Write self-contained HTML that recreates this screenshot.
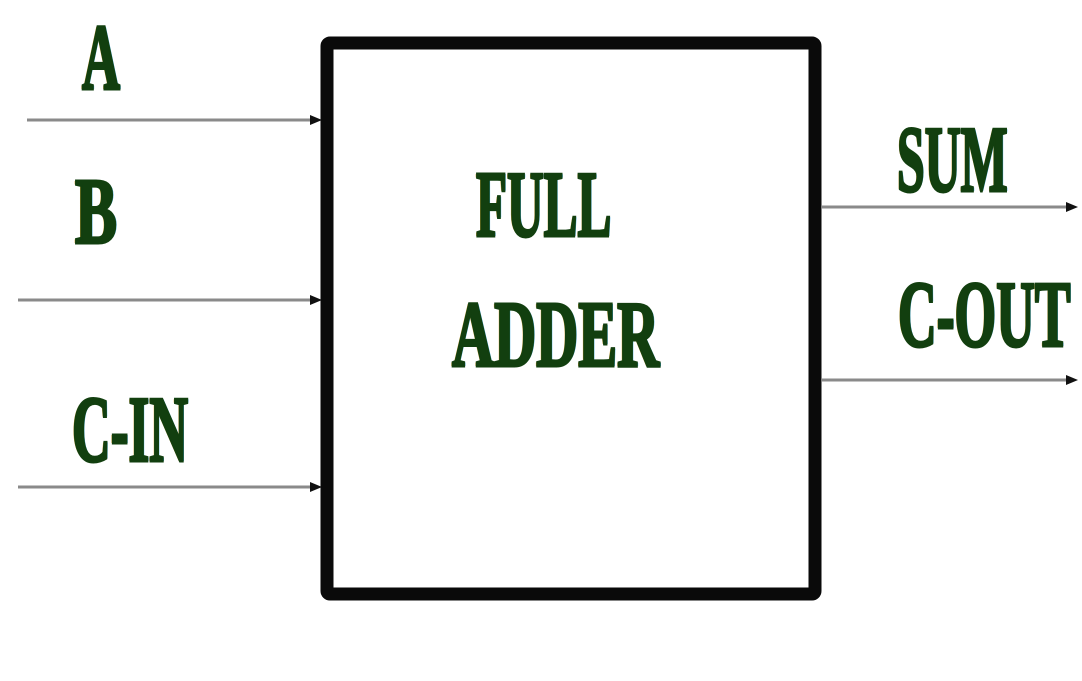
<!DOCTYPE html>
<html><head><meta charset="utf-8"><style>
html,body{margin:0;padding:0;background:#fff;}
body{width:1082px;height:681px;position:relative;overflow:hidden;}
.t{position:absolute;font-family:"Liberation Serif",serif;font-weight:bold;font-size:94px;line-height:94px;color:#123f0f;transform-origin:0 0;white-space:nowrap;-webkit-text-stroke:3px #123f0f;text-shadow:-2px 0 0 #d8a53a,2px 0 0 #45aee5;}
svg{position:absolute;left:0;top:0;}
</style></head><body>
<svg width="1082" height="681">
<g stroke="#8a8a8a" stroke-width="3">
<line x1="27" y1="120" x2="315" y2="120"/>
<line x1="18" y1="300" x2="315" y2="300"/>
<line x1="18" y1="487" x2="315" y2="487"/>
<line x1="822" y1="207" x2="1068" y2="207"/>
<line x1="822" y1="380" x2="1068" y2="380"/>
</g>
<g fill="#111">
<polygon points="310,115 322,120 310,125"/>
<polygon points="310,295 322,300 310,305"/>
<polygon points="310,482 322,487 310,492"/>
<polygon points="1066,202 1078,207 1066,212"/>
<polygon points="1066,375 1078,380 1066,385"/>
</g>
<rect x="327" y="43" width="488" height="551" fill="none" stroke="#0a0a0a" stroke-width="13" rx="3"/>
</svg>
<div class="t" style="left:82px;top:11px;transform:scaleX(0.56)">A</div>
<div class="t" style="left:75px;top:165px;transform:scaleX(0.67)">B</div>
<div class="t" style="left:72px;top:383px;transform:scaleX(0.57)">C-IN</div>
<div class="t" style="left:897px;top:113px;transform:scaleX(0.53)">SUM</div>
<div class="t" style="left:898px;top:268px;transform:scaleX(0.57)">C-OUT</div>
<div class="t" style="left:476px;top:158px;transform:scaleX(0.54)">FULL</div>
<div class="t" style="left:452px;top:288px;transform:scaleX(0.62)">ADDER</div>
</body></html>
